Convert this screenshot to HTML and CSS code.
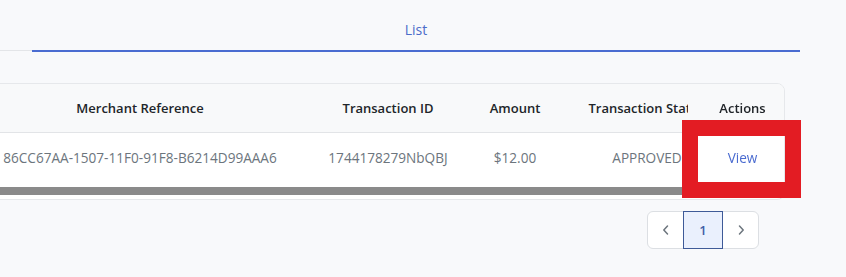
FILE: index.html
```html
<!DOCTYPE html>
<html lang="en">
<head>
<meta charset="utf-8">
<title>Transactions</title>
<link rel="stylesheet" href="styles.css">
</head>
<body>
<div class="page">
  <nav class="tabs">
    <span class="tabs-lead"></span>
    <div class="tab tab-active">List</div>
  </nav>

  <section class="card">
    <div class="scroll">
      <table class="grid">
        <colgroup>
          <col class="c-ref">
          <col class="c-id">
          <col class="c-amt">
          <col class="c-status">
          <col class="c-actions">
        </colgroup>
        <thead>
          <tr>
            <th>Merchant Reference</th>
            <th>Transaction ID</th>
            <th>Amount</th>
            <th>Transaction Status</th>
            <th class="sticky">Actions</th>
          </tr>
        </thead>
        <tbody>
          <tr>
            <td>86CC67AA-1507-11F0-91F8-B6214D99AAA6</td>
            <td>1744178279NbQBJ</td>
            <td>$12.00</td>
            <td>APPROVED</td>
            <td class="sticky"><a class="view-link" href="#">View</a></td>
          </tr>
        </tbody>
      </table>
    </div>
    <div class="hscroll"><div class="hscroll-thumb"></div></div>
  </section>

  <div class="pager-row">
    <div class="pager">
      <button class="pg pg-nav" aria-label="Previous">
        <svg width="10" height="12" viewBox="0 0 10 12"><path d="M6.5 2 L2.8 6 L6.5 10" fill="none" stroke="currentColor" stroke-width="1.5" stroke-linecap="round" stroke-linejoin="round"/></svg>
      </button>
      <button class="pg pg-current">1</button>
      <button class="pg pg-nav" aria-label="Next">
        <svg width="10" height="12" viewBox="0 0 10 12"><path d="M3.5 2 L7.2 6 L3.5 10" fill="none" stroke="currentColor" stroke-width="1.5" stroke-linecap="round" stroke-linejoin="round"/></svg>
      </button>
    </div>
  </div>
</div>
<div class="highlight"></div>
</body>
</html>
```

FILE: styles.css
```css
* { box-sizing: border-box; }

html, body {
  margin: 0;
  padding: 0;
  background: #f8f9fb;
  overflow: hidden;
}

body {
  font-family: "Segoe UI", "Open Sans", "Noto Sans", sans-serif;
  font-size: 13px;
  color: #212529;
  width: 846px;
  height: 277px;
  position: relative;
}

.page {
  padding-right: 61px;
}

/* Tabs */
.tabs {
  display: flex;
  align-items: flex-start;
  height: 52px;
}
.tabs-lead {
  width: 32px;
  height: 51px;
  border-bottom: 1px solid #e3e5e8;
  flex: none;
}
.tab {
  width: 768px;
  flex: none;
  text-align: center;
  padding-top: 20px;
  line-height: 20px;
  height: 52px;
  font-size: 14px;
}
.tab-active {
  color: #4b6cc9;
  border-bottom: 2px solid #4a6cd1;
}

/* Card */
.card {
  margin-top: 31px;
  margin-left: -30px;
  background: #ffffff;
  border: 1px solid #e6e8eb;
  border-radius: 8px;
  padding-bottom: 4px;
  overflow: hidden;
}
.scroll {
  overflow: hidden;
}
.hscroll {
  height: 8px;
  background: #ffffff;
}
.hscroll-thumb {
  width: 776px;
  height: 8px;
  background: #8a8a8a;
}

.grid {
  border-collapse: collapse;
  table-layout: fixed;
  width: 856px;
}
.c-ref { width: 338px; }
.c-id { width: 158px; }
.c-amt { width: 96px; }
.c-status { width: 168px; }
.c-actions { width: 96px; }

.grid th {
  height: 48px;
  background: #f8f9fa;
  font-weight: 600;
  color: #212529;
  text-align: center;
  white-space: nowrap;
  padding: 0 8px;
  border-bottom: 1px solid #e2e4e7;
}
.grid td {
  height: 55px;
  padding: 0 8px 5px;
  text-align: center;
  white-space: nowrap;
  font-size: 13.6px;
  color: #6c757d;
  background: #ffffff;
}
.grid .sticky {
  position: sticky;
  right: 0;
  padding-left: 13px;
  padding-right: 0;
  box-shadow: -2px 0 3px -1px rgba(0, 0, 0, 0.12);
}
.grid th.sticky { background: #f8f9fa; }

.view-link {
  color: #4a6bd0;
  text-decoration: none;
}

/* Pagination */
.pager-row {
  display: flex;
  justify-content: flex-end;
  padding-top: 11px;
  padding-right: 26px;
}
.pager {
  display: flex;
  border: 1px solid #dcdfe3;
  border-radius: 6px;
  background: #ffffff;
  height: 38px;
}
.pg {
  font-family: inherit;
  font-size: 13px;
  border: none;
  background: transparent;
  display: flex;
  align-items: center;
  justify-content: center;
  padding: 0;
  cursor: pointer;
}
.pg-nav {
  width: 35px;
  color: #6c757d;
  border-radius: 6px;
}
.pg-current {
  width: 40px;
  margin: -1px 0;
  height: 38px;
  border: 1px solid #3e5a98;
  background: #eaf0fd;
  color: #3f5fa8;
  font-weight: 600;
}

/* Review highlight overlay */
.highlight {
  position: absolute;
  left: 682px;
  top: 120px;
  width: 119px;
  height: 78px;
  border: 16px solid #e31c23;
  pointer-events: none;
}
```
